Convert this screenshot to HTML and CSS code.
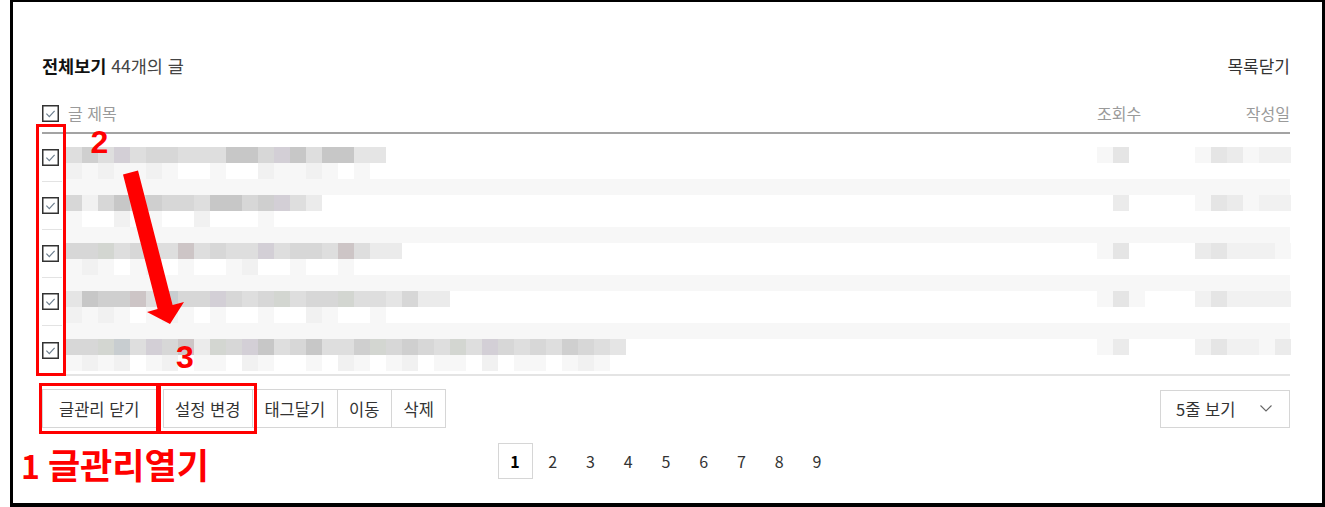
FILE: index.html
```html
<!DOCTYPE html>
<html lang="ko">
<head>
<meta charset="utf-8">
<title>전체보기</title>
<link rel="stylesheet" href="styles.css">
</head>
<body>
<div class="frame">
  <div class="top">
    <div class="ttl"><b>전체보기</b> <span class="count">44개의 글</span></div>
    <div class="close">목록닫기</div>
  </div>

  <div class="thead">
    <div class="chk"><svg class="cb" viewBox="0 0 17 17"><rect x="0.75" y="0.75" width="15.5" height="15.5"/><path d="M4.4 8.7 L7.3 11.6 L12.6 5.9"/></svg></div>
    <div class="cols">
      <span class="h-title">글 제목</span>
      <span class="h-views">조회수</span>
      <span class="h-date">작성일</span>
    </div>
  </div>

  <div class="list">
    <div class="row">
      <div class="chk"><svg class="cb" viewBox="0 0 17 17"><rect x="0.75" y="0.75" width="15.5" height="15.5"/><path d="M4.4 8.7 L7.3 11.6 L12.6 5.9"/></svg></div>
      <div class="mos">
        <div class="line" data-m="5 7 5 p 5 6 6 5 5 5 8 8 6 p 8 5 8 8 4 4"></div>
        <div class="line v" data-m="1 4"></div>
        <div class="line d" data-m="1 4 3 1 2 2"></div>
        <div class="line" data-m="2 1 2 1 1 2 1 0 0 1 0 0 2 1 1 2 1 0 1 0"></div>
      </div>
    </div>
    <div class="row">
      <div class="chk"><svg class="cb" viewBox="0 0 17 17"><rect x="0.75" y="0.75" width="15.5" height="15.5"/><path d="M4.4 8.7 L7.3 11.6 L12.6 5.9"/></svg></div>
      <div class="mos">
        <div class="line" data-m="6 2 6 8 6 7 6 6 5 8 8 6 7 p 5 3"></div>
        <div class="line v" data-m="0 3"></div>
        <div class="line d" data-m="1 4 3 1 2 2"></div>
        <div class="line" data-m="1 0 0 2 0 1 0 0 2 0 0 0 1 0 0 0"></div>
      </div>
    </div>
    <div class="row">
      <div class="chk"><svg class="cb" viewBox="0 0 17 17"><rect x="0.75" y="0.75" width="15.5" height="15.5"/><path d="M4.4 8.7 L7.3 11.6 L12.6 5.9"/></svg></div>
      <div class="mos">
        <div class="line" data-m="6 6 q 5 6 5 5 r 5 6 5 5 p 5 6 6 5 r 5 3 3"></div>
        <div class="line v" data-m="1 4"></div>
        <div class="line d" data-m="3 4 2 2 2 1"></div>
        <div class="line" data-m="1 2 1 0 1 2 0 1 0 0 1 2 0 0 1 0 0 1 0 0 0"></div>
      </div>
    </div>
    <div class="row">
      <div class="chk"><svg class="cb" viewBox="0 0 17 17"><rect x="0.75" y="0.75" width="15.5" height="15.5"/><path d="M4.4 8.7 L7.3 11.6 L12.6 5.9"/></svg></div>
      <div class="mos">
        <div class="line" data-m="4 8 7 7 r 5 s 6 6 p 6 5 6 q 5 6 6 q 5 5 4 6 3 3"></div>
        <div class="line v" data-m="1 4 1"></div>
        <div class="line d" data-m="2 4 2 2 2 2"></div>
        <div class="line" data-m="2 1 2 1 0 1 2 1 0 1 0 0 1 0 0 2 1 0 0 1 0 0 0 0"></div>
      </div>
    </div>
    <div class="row">
      <div class="chk"><svg class="cb" viewBox="0 0 17 17"><rect x="0.75" y="0.75" width="15.5" height="15.5"/><path d="M4.4 8.7 L7.3 11.6 L12.6 5.9"/></svg></div>
      <div class="mos">
        <div class="line" data-m="6 6 q s 5 p 6 r 3 q 6 p 8 5 6 8 5 5 7 q 6 7 6 5 q 5 p 6 5 6 5 7 6 5 4"></div>
        <div class="line v" data-m="1 3"></div>
        <div class="line d" data-m="2 4 2 2 1 3"></div>
        <div class="line" data-m="1 2 1 2 0 1 2 0 1 1 0 2 1 0 0 1 0 2 1 0 1 2 0 1 1 0 2 0 1 1 0 1 2 1 0"></div>
      </div>
    </div>
  </div>

  <div class="foot">
    <div class="btns">
      <button class="btn wide">글관리 닫기</button>
      <div class="grp">
        <button class="btn">설정 변경</button>
        <button class="btn">태그달기</button>
        <button class="btn">이동</button>
        <button class="btn">삭제</button>
      </div>
    </div>
    <div class="select">
      <span>5줄 보기</span>
      <svg class="chev" viewBox="0 0 12 7"><path d="M0.5 0.5 L6 6 L11.5 0.5"/></svg>
    </div>
  </div>

  <div class="pager">
    <a class="on">1</a><a>2</a><a>3</a><a>4</a><a>5</a><a>6</a><a>7</a><a>8</a><a>9</a>
  </div>

  <!-- red annotations -->
  <div class="rbox box-a"></div>
  <div class="rbox box-b"></div>
  <div class="rbox box-c"></div>
  <div class="anum num2">2</div>
  <div class="anum num3">3</div>
  <div class="alabel"><span class="one">1</span>글관리열기</div>
  <svg class="arrow" viewBox="0 0 300 400" width="300" height="400">
    <polygon points="123,174.5 138,170.5 172.6,305 184,302 170,324 147,312 157.6,309"/>
  </svg>
</div>
<script src="script.js"></script>
</body>
</html>
```

FILE: styles.css
```css
html, body {
  margin: 0;
  height: 507px;
  overflow: hidden;
  background: #fff;
}
body {
  font-family: "Noto Sans CJK KR", "Noto Sans", sans-serif;
  color: #333;
}
.frame {
  position: relative;
  box-sizing: border-box;
  margin: -1px 0 0 10px;
  width: 1315px;
  height: 508px;
  border: 3px solid #000;
  border-bottom-width: 4px;
  padding: 0 32px 0 29px;
  background: #fff;
}

/* title row */
.top {
  display: flex;
  justify-content: space-between;
  align-items: center;
  height: 24px;
  margin-top: 52px;
  font-size: 17px;
  line-height: 24px;
}
.ttl { font-size: 17.5px; }
.top b { font-weight: 700; color: #111; }
.count { color: #444; }
.close { color: #333; }

/* header */
.thead {
  display: flex;
  align-items: flex-end;
  height: 56px;
  box-sizing: border-box;
  padding-bottom: 9px;
  border-bottom: 2px solid #a3a3a3;
  font-size: 16px;
  line-height: 20px;
  color: #9a9a9a;
}
.chk {
  width: 20px;
  flex: none;
  display: flex;
  align-items: center;
}
.cb {
  width: 17px;
  height: 17px;
  display: block;
}
.cb rect { fill: #fff; stroke: #333; stroke-width: 1.5; }
.cb path { fill: none; stroke: #6f8090; stroke-width: 1.2; }
.thead .chk { height: 20px; }
.cols {
  flex: 1;
  margin-left: 4px;
  display: grid;
  grid-template-columns: 1fr 98px 95px;
}
.h-title { padding-left: 2px; }
.h-date { text-align: right; }

/* list rows */
.list { border-bottom: 2px solid #e4e4e4; }
.row {
  display: flex;
  height: 48px;
}
.row .chk {
  box-sizing: border-box;
  border-bottom: 1px solid #e3e3e3;
}
.row:last-child .chk { border-bottom: 0; }
.mos {
  flex: 1;
  margin-left: 4px;
  box-sizing: border-box;
  padding-top: 13px;
  display: grid;
  grid-template-columns: 1fr 98px 95px;
  grid-template-rows: 16px 16px;
  align-content: start;
  background: linear-gradient(to top, #f7f7f7 3px, transparent 3px);
}
.row + .row .mos {
  background: linear-gradient(#f7f7f7 13px, transparent 13px 45px, #f7f7f7 45px);
}
.row + .row:last-child .mos {
  background: linear-gradient(#f7f7f7 13px, transparent 13px);
}
.line { display: flex; }
.line.v { grid-column: 2; grid-row: 1; }
.line.d { grid-column: 3; grid-row: 1; }
.b { display: block; flex: none; width: 16px; height: 16px; }
.b-0 { background: transparent; }
.b-1 { background: #f7f7f7; }
.b-2 { background: #f1f1f1; }
.b-3 { background: #ebebeb; }
.b-4 { background: #e5e5e5; }
.b-5 { background: #dedede; }
.b-6 { background: #d7d7d7; }
.b-7 { background: #cfcfcf; }
.b-8 { background: #c7c7c7; }
.b-p { background: #d3cfd6; }
.b-q { background: #d3d6d1; }
.b-r { background: #cdc5c6; }
.b-s { background: #c8cdd0; }

/* footer controls */
.foot {
  display: flex;
  justify-content: space-between;
  align-items: center;
  margin-top: 13px;
}
.btns { display: flex; gap: 6px; }
.grp { display: flex; }
.grp .btn + .btn { margin-left: -1px; }
.btn {
  height: 39px;
  box-sizing: border-box;
  border: 1px solid #d6d6d6;
  background: #fff;
  padding: 0 11.5px;
  margin: 0;
  font-family: "Noto Sans CJK KR", sans-serif;
  font-size: 16.5px;
  color: #333;
  line-height: 20px;
}
.btn.wide { padding: 0 16px; }
.select {
  width: 130px;
  height: 38px;
  box-sizing: border-box;
  border: 1px solid #d6d6d6;
  display: flex;
  align-items: center;
  justify-content: space-between;
  padding: 0 17px 0 15px;
  font-size: 16.5px;
  color: #333;
}
.chev { width: 12px; height: 7px; display: block; }
.chev path { fill: none; stroke: #666; stroke-width: 1.1; }

/* pager */
.pager {
  display: flex;
  justify-content: center;
  gap: 2.75px;
  margin-top: 15px;
}
.pager a {
  width: 35px;
  height: 36px;
  box-sizing: border-box;
  border: 1px solid transparent;
  display: flex;
  align-items: center;
  justify-content: center;
  font-size: 16px;
  color: #333;
}
.pager a.on {
  border-color: #d6d6d6;
  font-weight: 700;
  color: #000;
}

/* red annotations */
.rbox {
  position: absolute;
  box-sizing: border-box;
  border: 3px solid #f00;
}
.box-a { left: 23px; top: 122px; width: 30px; height: 252px; }
.box-b { left: 26px; top: 381px; width: 120px; height: 51px; }
.box-c { left: 145px; top: 381px; width: 99px; height: 51px; }
.anum, .alabel {
  position: absolute;
  color: #f00;
  font-weight: 700;
}
.anum {
  font-family: "Liberation Sans", Arial, sans-serif;
  font-size: 32px;
  line-height: 25px;
}
.num2 { left: 77.5px; top: 128px; }
.num3 { left: 163px; top: 343px; }
.alabel {
  font-family: "Noto Sans CJK KR", sans-serif;
  left: 8px;
  top: 444px;
  font-size: 35px;
  line-height: 36px;
  white-space: nowrap;
}
.alabel .one { font-size: 32px; margin-right: 8px; }
.arrow {
  position: absolute;
  left: -13px;
  top: -2px;
  pointer-events: none;
}
.arrow polygon { fill: #f00; }
```

FILE: script.js
```js
document.querySelectorAll('[data-m]').forEach(function (el) {
  el.dataset.m.split(' ').forEach(function (c) {
    var s = document.createElement('i');
    s.className = 'b b-' + c;
    el.appendChild(s);
  });
});
```
